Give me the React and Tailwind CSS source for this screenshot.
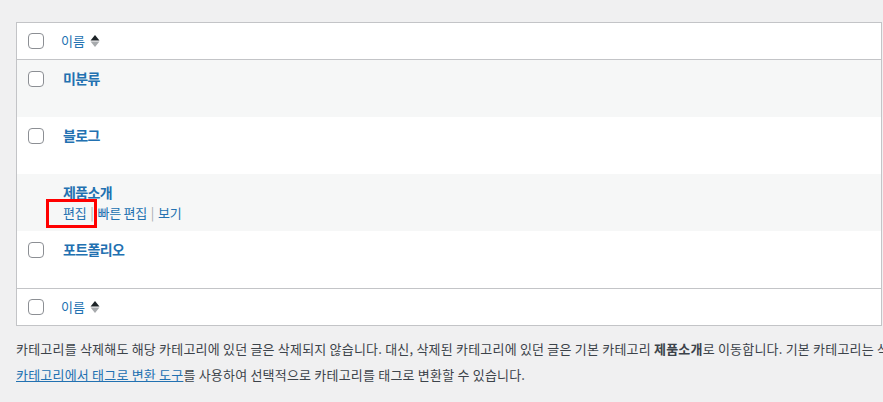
import React from 'react';

const font = { fontFamily: '"Noto Sans CJK KR", "Noto Sans", sans-serif' };

function Check() {
  return <span className="block w-4 h-4 rounded-[4px] border border-[#8c8f94] bg-white" />;
}

function SortIcon() {
  return (
    <svg width="10" height="14" viewBox="0 0 10 14" className="ml-[5px]">
      <path d="M5 1 L9.5 6.5 H0.5 Z" fill="#1d2327" />
      <path d="M5 13 L9.5 7.5 H0.5 Z" fill="#a7aaad" />
    </svg>
  );
}

function HeadRow({ top }) {
  return (
    <div className={`flex items-center h-[37px] bg-white ${top ? 'border-b' : 'border-t'} border-[#c3c4c7]`}>
      <div className="w-[44px] pl-[11px] flex items-center"><Check /></div>
      <a className="flex items-center text-[13px] text-[#2271b1]">이름<SortIcon /></a>
    </div>
  );
}

function Row({ title, alt, checkbox = true, actions }) {
  return (
    <div className={`relative flex h-[57px] ${alt ? 'bg-[#f6f7f7]' : 'bg-white'}`}>
      <div className="w-[44px] pl-[11px] pt-[11px]">{checkbox && <Check />}</div>
      <div className="pl-[2px] pt-[8px]">
        <a className="block text-[14px] font-bold text-[#2271b1] leading-[20px] tracking-[-0.6px]">{title}</a>
        {actions && (
          <div className="flex items-center text-[13px] text-[#2271b1] leading-[20px] mt-[1px] tracking-[-0.3px]">
            <span>편집</span>
            <span className="text-[#a7aaad] px-[4px]">|</span>
            <span>빠른 편집</span>
            <span className="text-[#a7aaad] px-[4px]">|</span>
            <span>보기</span>
          </div>
        )}
      </div>
      {actions && <div className="absolute left-[29px] top-[25px] w-[51px] h-[29px] border-[3px] border-[#ff0000]" />}
    </div>
  );
}

export default function App() {
  return (
    <div className="min-h-[402px] w-[883px] bg-[#f0f0f1] pl-4 pt-[22px] overflow-hidden" style={font}>
      <div className="w-[866px] border border-[#c3c4c7] bg-white">
        <HeadRow top />
        <Row title="미분류" alt />
        <Row title="블로그" />
        <Row title="제품소개" alt checkbox={false} actions />
        <Row title="포트폴리오" />
        <HeadRow />
      </div>
      <div className="mt-[10px] text-[13px] text-[#3c434a] leading-[26px] tracking-[0.2px] whitespace-nowrap">
        <p>카테고리를 삭제해도 해당 카테고리에 있던 글은 삭제되지 않습니다. 대신, 삭제된 카테고리에 있던 글은 기본 카테고리 <strong className="font-bold">제품소개</strong>로 이동합니다. 기본 카테고리는 삭제할 수 없습니다.</p>
        <p><a className="text-[#2271b1] underline">카테고리에서 태그로 변환 도구</a>를 사용하여 선택적으로 카테고리를 태그로 변환할 수 있습니다.</p>
      </div>
    </div>
  );
}
